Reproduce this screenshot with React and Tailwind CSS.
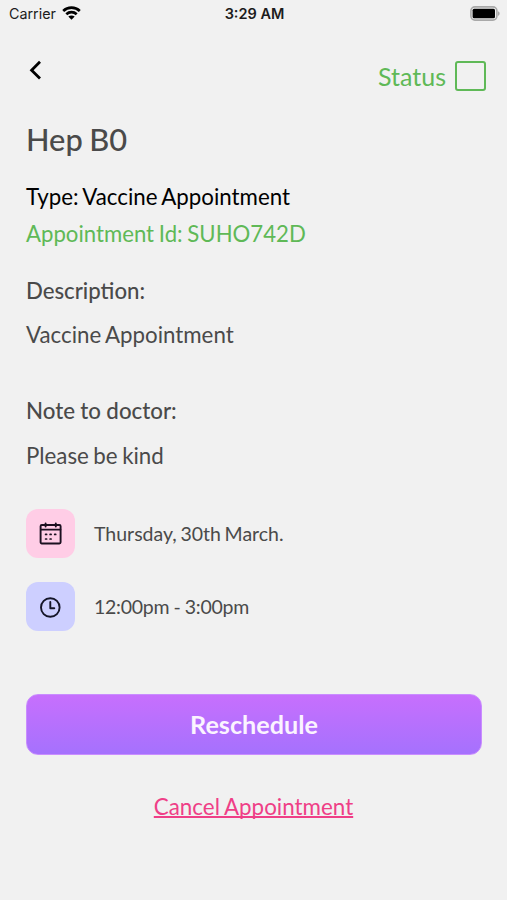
import React from 'react'

const StatusBar = () => (
  <div className="flex items-center justify-between h-7 pl-[9px] pr-[7px] font-['Inter',sans-serif] text-[#1c1c1c]">
    <div className="flex flex-1 items-center gap-[6px]">
      <p className="text-[14.3px] leading-7">Carrier</p>
      <svg className="w-[19px] h-[14px] -mt-[2px]" viewBox="0 0 19 14" fill="none" stroke="black" strokeWidth="2.7">
        <path d="M1.2 5C5.8 0.6 13.2 0.6 17.8 5" />
        <path d="M4.3 8.2C7.3 5.4 11.7 5.4 14.7 8.2" />
        <path d="M9.5 13.8L6.3 10.6C8.2 9 10.8 9 12.7 10.6Z" fill="black" stroke="none" />
      </svg>
    </div>
    <p className="text-[14.5px] leading-7 font-semibold">3:29 AM</p>
    <div className="flex flex-1 justify-end">
      <svg className="w-[30px] h-[15px] -mt-[2px]" viewBox="0 0 30 15">
        <rect x="0.9" y="0.9" width="26" height="13.2" rx="4" fill="#f1f1f1" stroke="#a9a9a9" strokeWidth="1.6" />
        <rect x="2.6" y="2.7" width="22.4" height="9.6" rx="1.5" fill="black" />
        <path d="M28 5.2C30.2 6 30.2 9 28 9.8Z" fill="#a9a9a9" />
      </svg>
    </div>
  </div>
)

const CalendarIcon = () => (
  <svg className="w-6 h-6" viewBox="0 0 24 24" fill="none" stroke="#1b1020" strokeWidth="1.9" strokeLinejoin="round" strokeLinecap="round">
    <rect x="1.6" y="3" width="20" height="18.5" rx="1.2" />
    <path d="M2 7.6H21.4M6.6 1.4V4.6M16.8 1.4V4.6" />
    <path d="M6.6 12.4H7.6M11.1 12.4H12.1M15.7 12.4H16.7M6.6 17H7.6M11.1 17H12.1" strokeWidth="1.7" />
  </svg>
)

const ClockIcon = () => (
  <svg className="w-6 h-6" viewBox="0 0 24 24" fill="none" stroke="#151528" strokeWidth="1.9" strokeLinejoin="round" strokeLinecap="round">
    <circle cx="11.3" cy="12.5" r="9.3" />
    <path d="M11.3 7V13.2H15.3" />
  </svg>
)

const App = () => {
  return (
    <div className="w-full h-[900px] bg-[#f1f1f1] font-['Lato',sans-serif] text-[#4a4a4a] whitespace-nowrap overflow-hidden">
      <StatusBar />

      {/* Header */}
      <div className="flex justify-between pl-[29px] pr-[21px] pt-8">
        <svg className="w-3 h-5" viewBox="0 0 12 20" fill="none" stroke="black" strokeWidth="2.8">
          <path d="M11 1.8L2.6 10.2L11 18.6" />
        </svg>
        <div className="flex items-center gap-[9px] h-8 text-[#5fb957]">
          <p className="text-[25px] leading-8">Status</p>
          <div className="w-[31px] h-[30px] border-2 border-[#5fb957] rounded-[3px]" />
        </div>
      </div>

      {/* Details */}
      <div className="px-[26px]">
        <h1 className="mt-[28px] text-[30.8px] leading-10 font-medium [word-spacing:-1.2px]">Hep B0</h1>
        <p className="mt-[19px] text-[22.3px] leading-9 text-black [word-spacing:-1.2px]">Type: Vaccine Appointment</p>
        <p className="mt-px text-[22.2px] leading-9 text-[#5fb957] [word-spacing:-1px]">Appointment Id: SUHO742D</p>

        <h2 className="mt-[21px] text-[22.2px] leading-9 font-medium">Description:</h2>
        <p className="mt-2 text-[22.3px] leading-9 [word-spacing:-1.2px]">Vaccine Appointment</p>

        <h2 className="mt-10 text-[22.3px] leading-9 font-medium [word-spacing:-0.3px]">Note to doctor:</h2>
        <p className="mt-[9px] text-[22.3px] leading-9 [word-spacing:-1.2px]">Please be kind</p>

        <div className="flex items-center gap-[19px] mt-[35px]">
          <div className="flex items-center justify-center w-[49px] h-[49px] rounded-[12px] bg-[#ffcde6]">
            <CalendarIcon />
          </div>
          <p className="text-[19.5px] leading-7 [word-spacing:-1.3px]">Thursday, 30th March.</p>
        </div>
        <div className="flex items-center gap-[19px] mt-[24px]">
          <div className="flex items-center justify-center w-[49px] h-[49px] rounded-[12px] bg-[#cdcfff]">
            <ClockIcon />
          </div>
          <p className="text-[19.5px] leading-7 tracking-[-0.25px] [word-spacing:-0.5px]">12:00pm - 3:00pm</p>
        </div>

        <button className="block mt-[63px] w-[456px] h-[61px] rounded-[12px] border border-[#c98dff] bg-linear-to-b from-[#c76ffd] to-[#a571fd] text-[25.2px] font-bold text-[#fbf3ff]">
          Reschedule
        </button>
        <p className="mt-[34px] text-center text-[22.4px] leading-9 text-[#ef3f87] underline decoration-[1.5px] underline-offset-1 [text-decoration-skip-ink:none] [word-spacing:-1px]">
          Cancel Appointment
        </p>
      </div>
    </div>
  )
}

export default App
